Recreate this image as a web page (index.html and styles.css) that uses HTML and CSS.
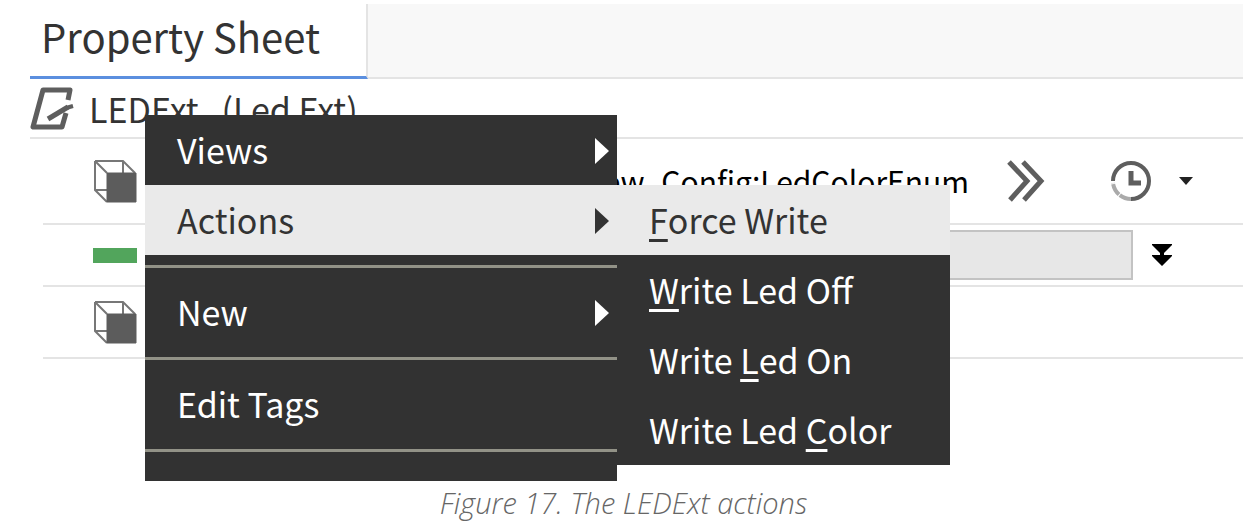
FILE: index.html
```html
<!DOCTYPE html>
<html lang="en">
<head>
  <meta charset="UTF-8" />
  <meta name="viewport" content="width=device-width, initial-scale=1.0" />
  <title>Property Sheet</title>
  <link rel="stylesheet" href="styles.css">
</head>
<body>
  <figure class="figure">
    <div class="sheet">
      <div class="tabs">
        <button class="tab">Property Sheet</button>
      </div>

      <div class="row row-title">
        <svg class="icon-sheet" viewBox="0 0 44 44" fill="none" stroke="#5e5e5e" stroke-width="5" stroke-linejoin="round">
          <path d="M38 14 40 4H13L3 41H32L36 27" />
          <path d="M18 33 38 21" stroke-width="5" />
          <path d="M36 22 43 20" stroke-width="4" />
        </svg>
        <span class="name">LEDExt&nbsp;&nbsp; (Led Ext)</span>
      </div>

      <div class="row row-link">
        <svg class="icon-cube" viewBox="0 0 44 44" fill="none" stroke="#777" stroke-width="2">
          <path d="M2 2H30L42 14M2 2V31L14 43M2 2 14 14M30 2V14M2 31H14" />
          <path d="M14 14H43V43H14Z" fill="#5c5c5c" stroke="#5c5c5c" stroke-width="1" />
        </svg>
        <span class="ord">New_Config:LedColorEnum</span>
        <button class="icon-btn btn-go" aria-label="Go">
          <svg width="38" height="42" viewBox="0 0 38 42" fill="none" stroke="#5e5e5e" stroke-width="5">
            <path d="M2 2 20 21 3 40M16 2 34 21 17 40" />
          </svg>
        </button>
        <button class="icon-btn btn-history" aria-label="History">
          <svg width="40" height="40" viewBox="0 0 40 40" fill="none" stroke="#5e5e5e" stroke-width="4">
            <path d="M2 20A18 18 0 1 1 20 38" />
            <path d="M20 38A18 18 0 0 1 2 22" stroke="#aaa" stroke-dasharray="12 1" />
            <path d="M20 10V22H30" stroke-width="5" />
          </svg>
        </button>
        <button class="icon-btn btn-menu" aria-label="History options">
          <svg width="14" height="8" viewBox="0 0 14 8"><path d="M0 0H14L7 8Z" fill="#222" /></svg>
        </button>
      </div>

      <div class="row row-value">
        <span class="status"></span>
        <input class="value" type="text" aria-label="Value" readonly>
        <button class="icon-btn" aria-label="Expand">
          <svg width="20" height="22" viewBox="0 0 20 22"><path d="M0 0H20V1L12 9V11H20V12L10 22 0 12V11H8V9L0 1Z" /></svg>
        </button>
      </div>

      <div class="row row-last">
        <svg class="icon-cube" viewBox="0 0 44 44" fill="none" stroke="#777" stroke-width="2">
          <path d="M2 2H30L42 14M2 2V31L14 43M2 2 14 14M30 2V14M2 31H14" />
          <path d="M14 14H43V43H14Z" fill="#5c5c5c" stroke="#5c5c5c" stroke-width="1" />
        </svg>
      </div>

      <ul class="menu context-menu">
        <li><button class="item parent">Views</button></li>
        <li class="open">
          <button class="item parent active">Actions</button>
          <ul class="menu submenu">
            <li><button class="item active"><u>F</u>orce Write</button></li>
            <li><button class="item"><u>W</u>rite Led Off</button></li>
            <li><button class="item">Write <u>L</u>ed On</button></li>
            <li><button class="item">Write Led <u>C</u>olor</button></li>
          </ul>
        </li>
        <li class="separator"></li>
        <li><button class="item parent">New</button></li>
        <li class="separator"></li>
        <li><button class="item">Edit Tags</button></li>
        <li class="separator"></li>
      </ul>
    </div>
    <figcaption>Figure 17. The LEDExt actions</figcaption>
  </figure>
</body>
</html>
```
FILE: styles.css
```css
:root {
  --menu-bg: #323232;
  --menu-active: #eaeaea;
  --line: #e4e4e4;
}

* {
  box-sizing: border-box;
  margin: 0;
  padding: 0;
}

body {
  background: #fff;
  color: #333;
  font-family: 'Noto Sans CJK SC', sans-serif;
  font-size: 34px;
}

button {
  font: inherit;
  color: inherit;
  background: none;
  border: none;
  cursor: pointer;
}

svg {
  display: block;
  flex: none;
}

.figure {
  padding-top: 4px;
}

/* Property sheet */
.sheet {
  position: relative;
  margin: 0 4px 0 30px;
  padding-bottom: 122px;
}

.tabs {
  display: flex;
  height: 75px;
  background: #f8f8f8;
  border-bottom: 2px solid var(--line);
}

.tab {
  height: 75px;
  padding: 0 46px 8px 11px;
  font-size: 40px;
  line-height: 64px;
  background: #fff;
  border-right: 2px solid var(--line);
  border-bottom: 3px solid #5b8fdf;
}

.row {
  display: flex;
  align-items: center;
  margin-left: 13px;
  padding-left: 50px;
  border-bottom: 2px solid #e4e4e4;
}

.row-title {
  height: 60px;
  margin-left: 0;
  padding-left: 0;
  gap: 15px;
}

.row-link {
  height: 86px;
}

.row-value {
  height: 62px;
}

.row-last {
  height: 72px;
}

.icon-sheet,
.icon-cube {
  width: 44px;
  height: 44px;
}

.ord {
  margin-left: auto;
  padding-bottom: 2px;
  color: #000;
  font-size: 30px;
}

.icon-btn {
  display: flex;
}

.btn-go {
  margin-left: 38px;
}

.btn-history {
  margin-left: 66px;
}

.btn-menu {
  margin: 0 50px 0 28px;
}

.status {
  width: 44px;
  height: 15px;
  background: #52a55c;
}

.value {
  flex: 1;
  height: 50px;
  margin: 0 19px 0 24px;
  background: #e7e7e7;
  border: 2px solid #c3c3c3;
}

.row-value .icon-btn {
  margin-right: 71px;
}

/* Menus */
.menu {
  position: absolute;
  list-style: none;
  background: var(--menu-bg);
  color: #fff;
}

.context-menu {
  top: 111px;
  left: 115px;
  width: 472px;
  padding-bottom: 20px;
}

.submenu {
  top: 0;
  left: 100%;
  width: 333px;
}

.open {
  position: relative;
}

.item {
  display: flex;
  align-items: center;
  width: 100%;
  height: 70px;
  padding: 0 8px 2px 32px;
  text-align: left;
  white-space: pre;
}

.item.active {
  background: var(--menu-active);
  color: #333;
}

.item u {
  text-decoration-thickness: 3px;
  text-underline-offset: 5px;
  text-decoration-skip-ink: none;
}

.parent::after {
  content: '';
  margin-top: 4px;
  margin-left: auto;
  border: solid transparent;
  border-width: 13px 0 13px 14px;
  border-left-color: currentColor;
}

.separator {
  padding: 10px 0 9px;
}

.separator::before {
  content: '';
  display: block;
  height: 3px;
  background: #929287;
}

figcaption {
  color: #666;
  font-family: 'Open Sans', sans-serif;
  font-size: 29px;
  font-style: italic;
  font-weight: 300;
  line-height: 43px;
  text-align: center;
}
```
